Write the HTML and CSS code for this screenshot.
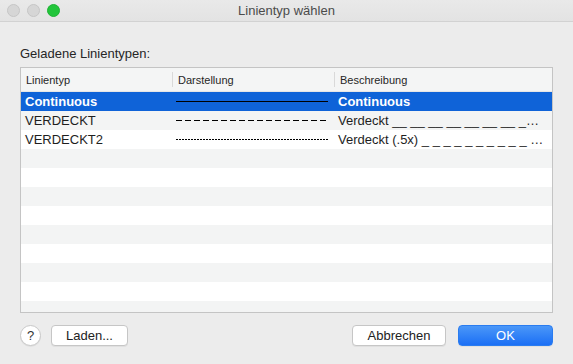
FILE: index.html
```html
<!DOCTYPE html>
<html lang="de">
<head>
    <meta charset="UTF-8">
    <title>Linientyp wählen</title>
    <link rel="stylesheet" href="styles.css">
</head>
<body>
    <div class="window">
        <div class="titlebar">
            <div class="lights">
                <span class="light"></span>
                <span class="light"></span>
                <span class="light green"></span>
            </div>
            <div class="title">Linientyp wählen</div>
        </div>
        <div class="content">
            <div class="caption">Geladene Linientypen:</div>
            <div class="table">
                <div class="head">
                    <div class="th">Linientyp</div>
                    <div class="th">Darstellung</div>
                    <div class="th">Beschreibung</div>
                </div>
                <div class="rows">
                    <div class="row selected">
                        <div class="td">Continuous</div>
                        <div class="td"><span class="line solid"></span></div>
                        <div class="td">Continuous</div>
                    </div>
                    <div class="row">
                        <div class="td">VERDECKT</div>
                        <div class="td"><span class="line dashed"></span></div>
                        <div class="td desc">Verdeckt __ __ __ __ __ __ __ __ __ __ __ __ __ __ __ __</div>
                    </div>
                    <div class="row">
                        <div class="td">VERDECKT2</div>
                        <div class="td"><span class="line dotted"></span></div>
                        <div class="td desc">Verdeckt (.5x) _ _ _ _ _ _ _ _ _ _ _ _ _ _ _ _ _ _ _ _ _ _</div>
                    </div>
                    <div class="row"></div>
                    <div class="row"></div>
                    <div class="row"></div>
                    <div class="row"></div>
                    <div class="row"></div>
                    <div class="row"></div>
                    <div class="row"></div>
                    <div class="row"></div>
                    <div class="row"></div>
                </div>
            </div>
            <div class="footer">
                <button class="help">?</button>
                <button class="btn load">Laden...</button>
                <div class="spacer"></div>
                <button class="btn cancel">Abbrechen</button>
                <button class="btn ok">OK</button>
            </div>
        </div>
    </div>
</body>
</html>
```

FILE: styles.css
```css
body {
    margin: 0;
    font-family: "Liberation Sans", Arial, sans-serif;
    background-color: #ececec;
    color: #222;
}
.window {
    width: 573px;
    height: 364px;
    display: flex;
    flex-direction: column;
    background-color: #ececec;
    overflow: hidden;
}
.titlebar {
    height: 21px;
    border-bottom: 1px solid #d2d2d2;
    background: linear-gradient(#e9e9e9, #e3e3e3);
    display: flex;
    align-items: center;
    position: relative;
}
.lights {
    display: flex;
    gap: 7px;
    padding-left: 7px;
}
.light {
    width: 11px;
    height: 11px;
    border-radius: 50%;
    background-color: #d6d6d6;
    border: 1px solid #c6c6c6;
}
.light.green {
    background-color: #22c53b;
    border-color: #1fb335;
}
.title {
    position: absolute;
    left: 0;
    right: 0;
    text-align: center;
    font-size: 13px;
    color: #4b4b4b;
}
.content {
    flex: 1;
    display: flex;
    flex-direction: column;
    padding: 0 20px;
}
.caption {
    font-size: 13px;
    margin-top: 24px;
    height: 21px;
    color: #262626;
}
.table {
    height: 244px;
    border: 1px solid #c4c4c4;
    background-color: #fff;
    overflow: hidden;
}
.head,
.row {
    display: grid;
    grid-template-columns: 151px 162px 1fr;
}
.head {
    height: 23px;
    background-color: #f4f5f5;
    border-bottom: 1px solid #e6e6e6;
    font-size: 11px;
    color: #262626;
}
.th {
    display: flex;
    align-items: center;
    padding-left: 5px;
    border-left: 1px solid #d9d9d9;
    margin: 4px 0;
}
.th:first-child {
    border-left: none;
}
.row {
    height: 19px;
    font-size: 13px;
    color: #1e1e1e;
}
.row:nth-child(even) {
    background-color: #f3f4f4;
}
.row.selected {
    background-color: #0f63d8;
    color: #fff;
    font-weight: bold;
}
.td {
    display: flex;
    align-items: center;
    padding-left: 4px;
    padding-right: 6px;
    white-space: nowrap;
    overflow: hidden;
}
.td.desc {
    display: block;
    line-height: 19px;
    text-overflow: ellipsis;
}
.line {
    display: block;
    width: 155px;
    height: 1px;
}
.line.solid {
    background-color: #000;
}
.line.dashed {
    background-image: repeating-linear-gradient(to right, #000 0 6px, transparent 6px 9px);
}
.line.dotted {
    background-image: repeating-linear-gradient(to right, #000 0 2px, transparent 2px 3px);
}
.footer {
    display: flex;
    align-items: center;
    margin-top: 12px;
}
.spacer {
    flex: 1;
}
button {
    font-family: "Liberation Sans", Arial, sans-serif;
    font-size: 13px;
    cursor: pointer;
}
.help {
    width: 21px;
    height: 21px;
    border-radius: 50%;
    border: 1px solid #c8c8c8;
    background-color: #fff;
    padding: 0;
    color: #333;
    box-shadow: 0 1px 0 rgba(0, 0, 0, 0.05);
}
.btn {
    height: 21px;
    border-radius: 4px;
    border: 1px solid #c6c6c6;
    background-color: #fff;
    color: #222;
    padding: 0;
    box-shadow: 0 1px 0 rgba(0, 0, 0, 0.05);
}
.load {
    width: 77px;
    margin-left: 10px;
}
.cancel {
    width: 94px;
}
.ok {
    width: 95px;
    margin-left: 12px;
    border: 1px solid #2a7cf0;
    background: linear-gradient(#4b97f8, #1b6ff5);
    color: #fff;
}
```
